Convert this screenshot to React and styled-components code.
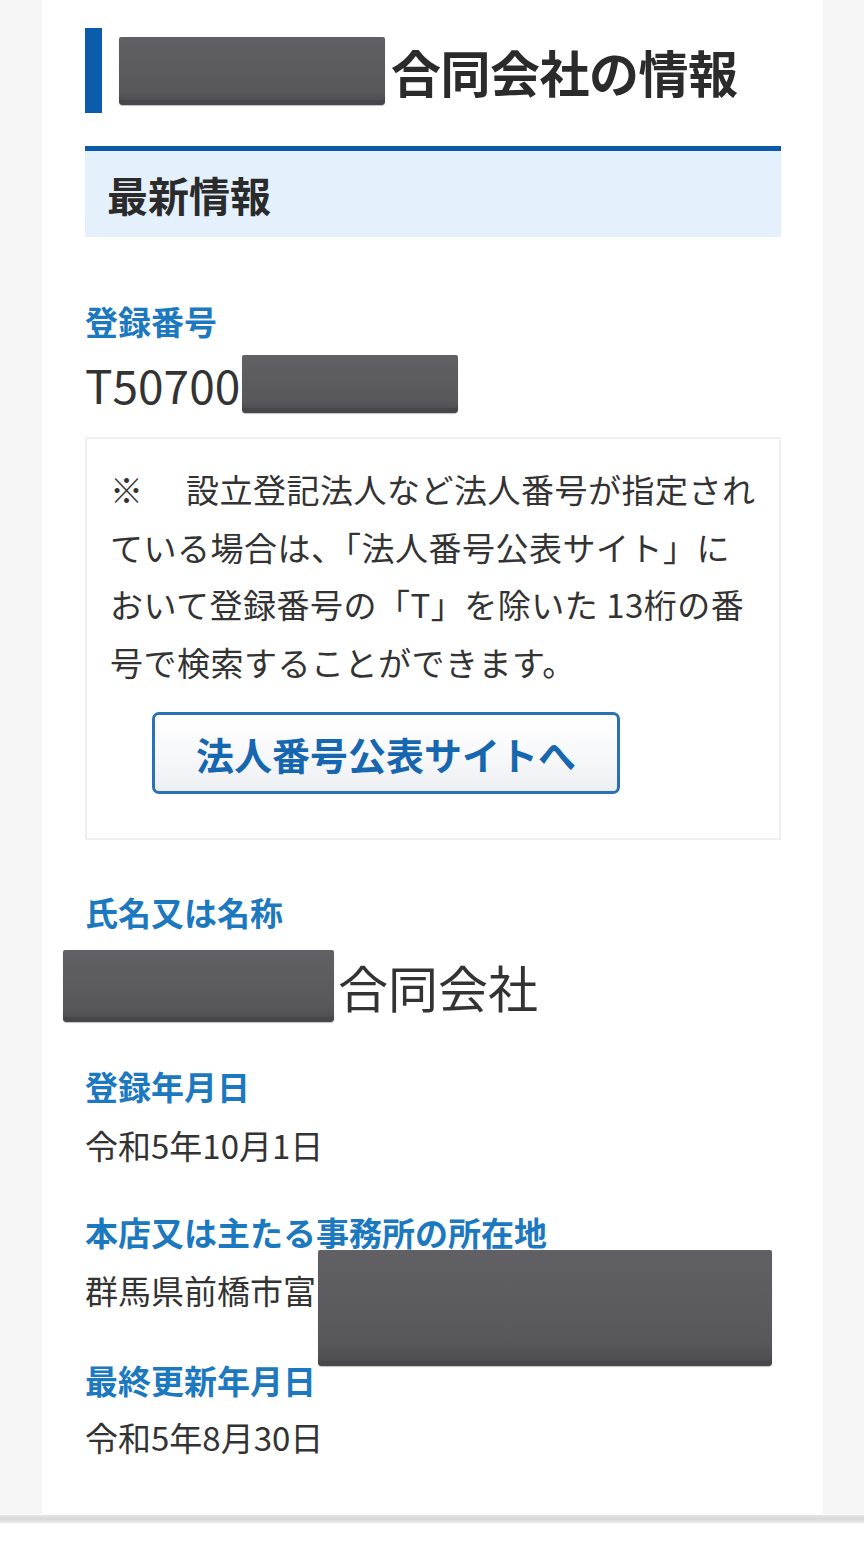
import React from "react";
import styled, { createGlobalStyle } from "styled-components";

const Global = createGlobalStyle`
  html, body { margin: 0; padding: 0; background: #ffffff; }
  body { font-family: "Noto Sans CJK JP", "Noto Sans", sans-serif; color: #333333; }
`;

const Page = styled.div`
  width: 864px;
  display: flex;
  flex-direction: column;
`;

const Frame = styled.div`
  background: #f5f5f5;
  padding: 0 41px 0 42px;
`;

const Panel = styled.main`
  background: #ffffff;
  padding: 28px 42px 54px 43px;
  display: flex;
  flex-direction: column;
`;

const TitleRow = styled.h1`
  margin: 0;
  height: 85px;
  display: flex;
  align-items: center;
  font-size: 50px;
  font-weight: 700;
  color: #2b2b2b;
  letter-spacing: -0.5px;
`;

const TitleBar = styled.span`
  align-self: stretch;
  width: 17px;
  background: #0b5dab;
  margin-right: 17px;
`;

const Redaction = styled.span`
  display: inline-block;
  flex: none;
  width: ${(p) => p.$w}px;
  height: ${(p) => p.$h}px;
  margin-left: ${(p) => p.$ml || 0}px;
  margin-right: ${(p) => p.$mr || 0}px;
  border-radius: 2px 2px 4px 4px;
  background: linear-gradient(180deg, #616165 0%, #58585c 80%, #4a4a4f 100%);
  box-shadow: inset 0 -5px 0 #46464b, 0 1px 1px rgba(0, 0, 0, 0.25);
`;

const OverRedaction = styled(Redaction)`
  position: absolute;
  left: ${(p) => p.$x}px;
  top: ${(p) => p.$y}px;
`;

const SectionHeader = styled.h2`
  margin: 33px 0 0;
  height: 86px;
  border-top: 5px solid #0c5aa6;
  background: #e4f1fc;
  display: flex;
  align-items: center;
  padding-left: 22px;
  font-size: 41px;
  font-weight: 700;
  color: #2b2b2b;
`;

const Label = styled.dt`
  margin: ${(p) => p.$mt}px 0 0;
  font-size: 33px;
  line-height: 46px;
  font-weight: 700;
  color: #1c79bf;
`;

const Value = styled.dd`
  position: relative;
  margin: ${(p) => p.$mt}px 0 0;
  font-size: ${(p) => p.$fs || 33}px;
  line-height: ${(p) => p.$lh || 46}px;
  height: ${(p) => p.$lh || 46}px;
  color: #333333;
  display: flex;
  align-items: center;
`;

const List = styled.dl`
  margin: 0;
  display: flex;
  flex-direction: column;
`;

const Notice = styled.div`
  margin-top: 24px;
  border: 2px solid #efefef;
  padding: 22px 20px 44px 23px;
  display: flex;
  flex-direction: column;
  align-items: flex-start;
`;

const NoticeText = styled.p`
  margin: 0;
  font-size: 33px;
  line-height: 57.5px;
  letter-spacing: 0.5px;
  color: #333333;
  white-space: nowrap;
`;

const Mark = styled.span`
  display: inline-block;
  width: 76px;
`;

const LinkButton = styled.a`
  margin: 21px 0 0 42px;
  width: 468px;
  height: 82px;
  box-sizing: border-box;
  border: 3px solid #2a72b5;
  border-radius: 7px;
  background: linear-gradient(180deg, #ffffff 0%, #f7f8fa 55%, #eceef1 100%);
  display: flex;
  align-items: center;
  justify-content: center;
  font-size: 38px;
  font-weight: 700;
  color: #1766b0;
  text-decoration: none;
`;

const Divider = styled.div`
  height: 8px;
  margin-top: 1px;
  background: linear-gradient(180deg, #e6e6e6 0%, #d8d8d8 50%, #ececec 100%);
`;

const Bottom = styled.div`
  height: 31px;
  background: #ffffff;
`;

export default function App() {
  return (
    <Page>
      <Global />
      <Frame>
        <Panel>
          <TitleRow>
            <TitleBar />
            <Redaction $w={266} $h={68} $mr={6} />
            合同会社の情報
          </TitleRow>
          <SectionHeader>最新情報</SectionHeader>
          <List>
            <Label $mt={61}>登録番号</Label>
            <Value $mt={11} $fs={46} $lh={58}>
              T50700
              <Redaction $w={216} $h={58} $ml={2} />
            </Value>
          </List>
          <Notice>
            <NoticeText>
              <Mark>※</Mark>設立登記法人など法人番号が指定され
              <br />
              ている場合は、「法人番号公表サイト」に
              <br />
              おいて登録番号の「T」を除いた 13桁の番
              <br />
              号で検索することができます。
            </NoticeText>
            <LinkButton href="#">法人番号公表サイトへ</LinkButton>
          </Notice>
          <List>
            <Label $mt={49}>氏名又は名称</Label>
            <Value $mt={15} $fs={50} $lh={72}>
              <Redaction $w={271} $h={72} $ml={-22} $mr={4} />
              合同会社
            </Value>
            <Label $mt={41}>登録年月日</Label>
            <Value $mt={13}>令和5年10月1日</Value>
            <Label $mt={41}>本店又は主たる事務所の所在地</Label>
            <Value $mt={12}>
              群馬県前橋市富
              <OverRedaction $w={454} $h={116} $x={233} $y={-17} />
            </Value>
            <Label $mt={44}>最終更新年月日</Label>
            <Value $mt={11}>令和5年8月30日</Value>
          </List>
        </Panel>
      </Frame>
      <Divider />
      <Bottom />
    </Page>
  );
}
